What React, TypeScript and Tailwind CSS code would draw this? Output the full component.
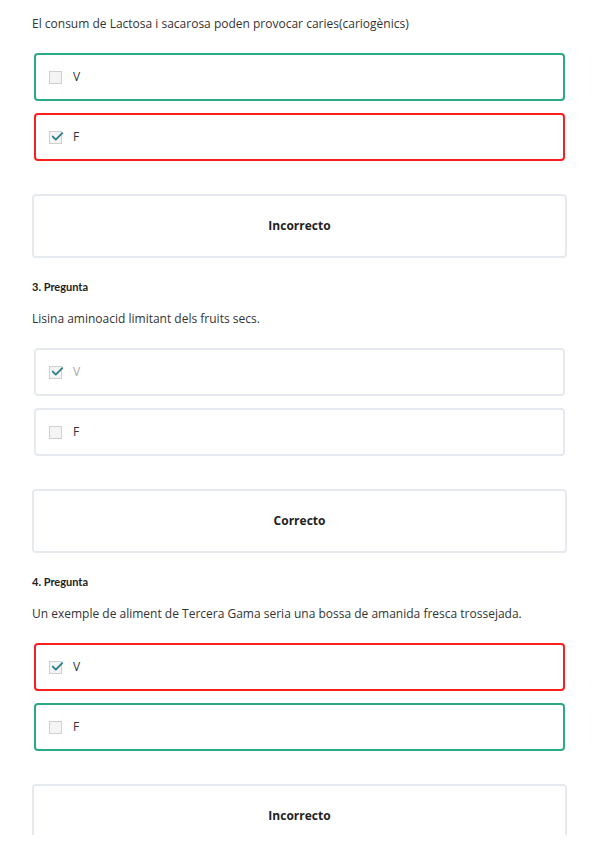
import React from "react";

type Opt = { label: string; checked: boolean; state: "green" | "red" | "none"; muted?: boolean };

function Check({ checked }: { checked: boolean }) {
  return (
    <span className="relative inline-block h-[13px] w-[13px] shrink-0 border border-[#cfcfcf] bg-[#f4f4f4]">
      {checked && (
        <svg viewBox="0 0 14 14" className="absolute left-[1px] top-[-1px] h-[12px] w-[13px]">
          <path d="M1.5 6.5 L5 10 L12.5 2.5" fill="none" stroke="#2d7f8c" strokeWidth="2.2" strokeLinecap="round" strokeLinejoin="round" />
        </svg>
      )}
    </span>
  );
}

function Option({ o }: { o: Opt }) {
  const border =
    o.state === "green" ? "border-[#2ba886]" : o.state === "red" ? "border-[#fb1e1e]" : "border-[#e6e9ee]";
  return (
    <div className={`mx-[2px] flex h-[48px] items-center gap-[11px] rounded-[4px] border-2 ${border} bg-white pl-[13px]`}>
      <Check checked={o.checked} />
      <span className={`text-[12px] ${o.muted ? "text-[#aaaaaa]" : "text-[#333333]"}`}>{o.label}</span>
    </div>
  );
}

function Result({ text }: { text: string }) {
  return (
    <div className="flex h-[64px] items-center justify-center rounded-[4px] border-2 border-[#e6e9ee] bg-white text-[12px] font-bold text-[#222222]">
      {text}
    </div>
  );
}

function Question({
  heading,
  text,
  options,
  result,
}: {
  heading?: string;
  text: string;
  options: Opt[];
  result: string;
}) {
  return (
    <div className="flex flex-col">
      {heading && (
        <div className="mb-[16px] h-[14px] text-[11px] font-bold leading-[14px] text-[#222222] [font-family:Lato,'Open_Sans',sans-serif]">
          {heading}
        </div>
      )}
      <div className="h-[18px] text-[12px] leading-[18px] text-[#333333]">{text}</div>
      <div className="mt-[20px] flex flex-col gap-[12px]">
        {options.map((o, i) => (
          <Option key={i} o={o} />
        ))}
      </div>
      <div className="mt-[33px]">
        <Result text={result} />
      </div>
    </div>
  );
}

export default function App() {
  return (
    <div className="h-[848px] w-[599px] bg-white [font-family:'Open_Sans',sans-serif]">
      <div className="h-[835px] overflow-hidden px-[32px] pt-[15px]">
        <div className="flex flex-col gap-[22px]">
          <Question
            text="El consum de Lactosa i sacarosa poden provocar caries(cariogènics)"
            options={[
              { label: "V", checked: false, state: "green" },
              { label: "F", checked: true, state: "red" },
            ]}
            result="Incorrecto"
          />
          <Question
            heading="3. Pregunta"
            text="Lisina aminoacid limitant dels fruits secs."
            options={[
              { label: "V", checked: true, state: "none", muted: true },
              { label: "F", checked: false, state: "none" },
            ]}
            result="Correcto"
          />
          <Question
            heading="4. Pregunta"
            text="Un exemple de aliment de Tercera Gama seria una bossa de amanida fresca trossejada."
            options={[
              { label: "V", checked: true, state: "red" },
              { label: "F", checked: false, state: "green" },
            ]}
            result="Incorrecto"
          />
        </div>
      </div>
    </div>
  );
}
